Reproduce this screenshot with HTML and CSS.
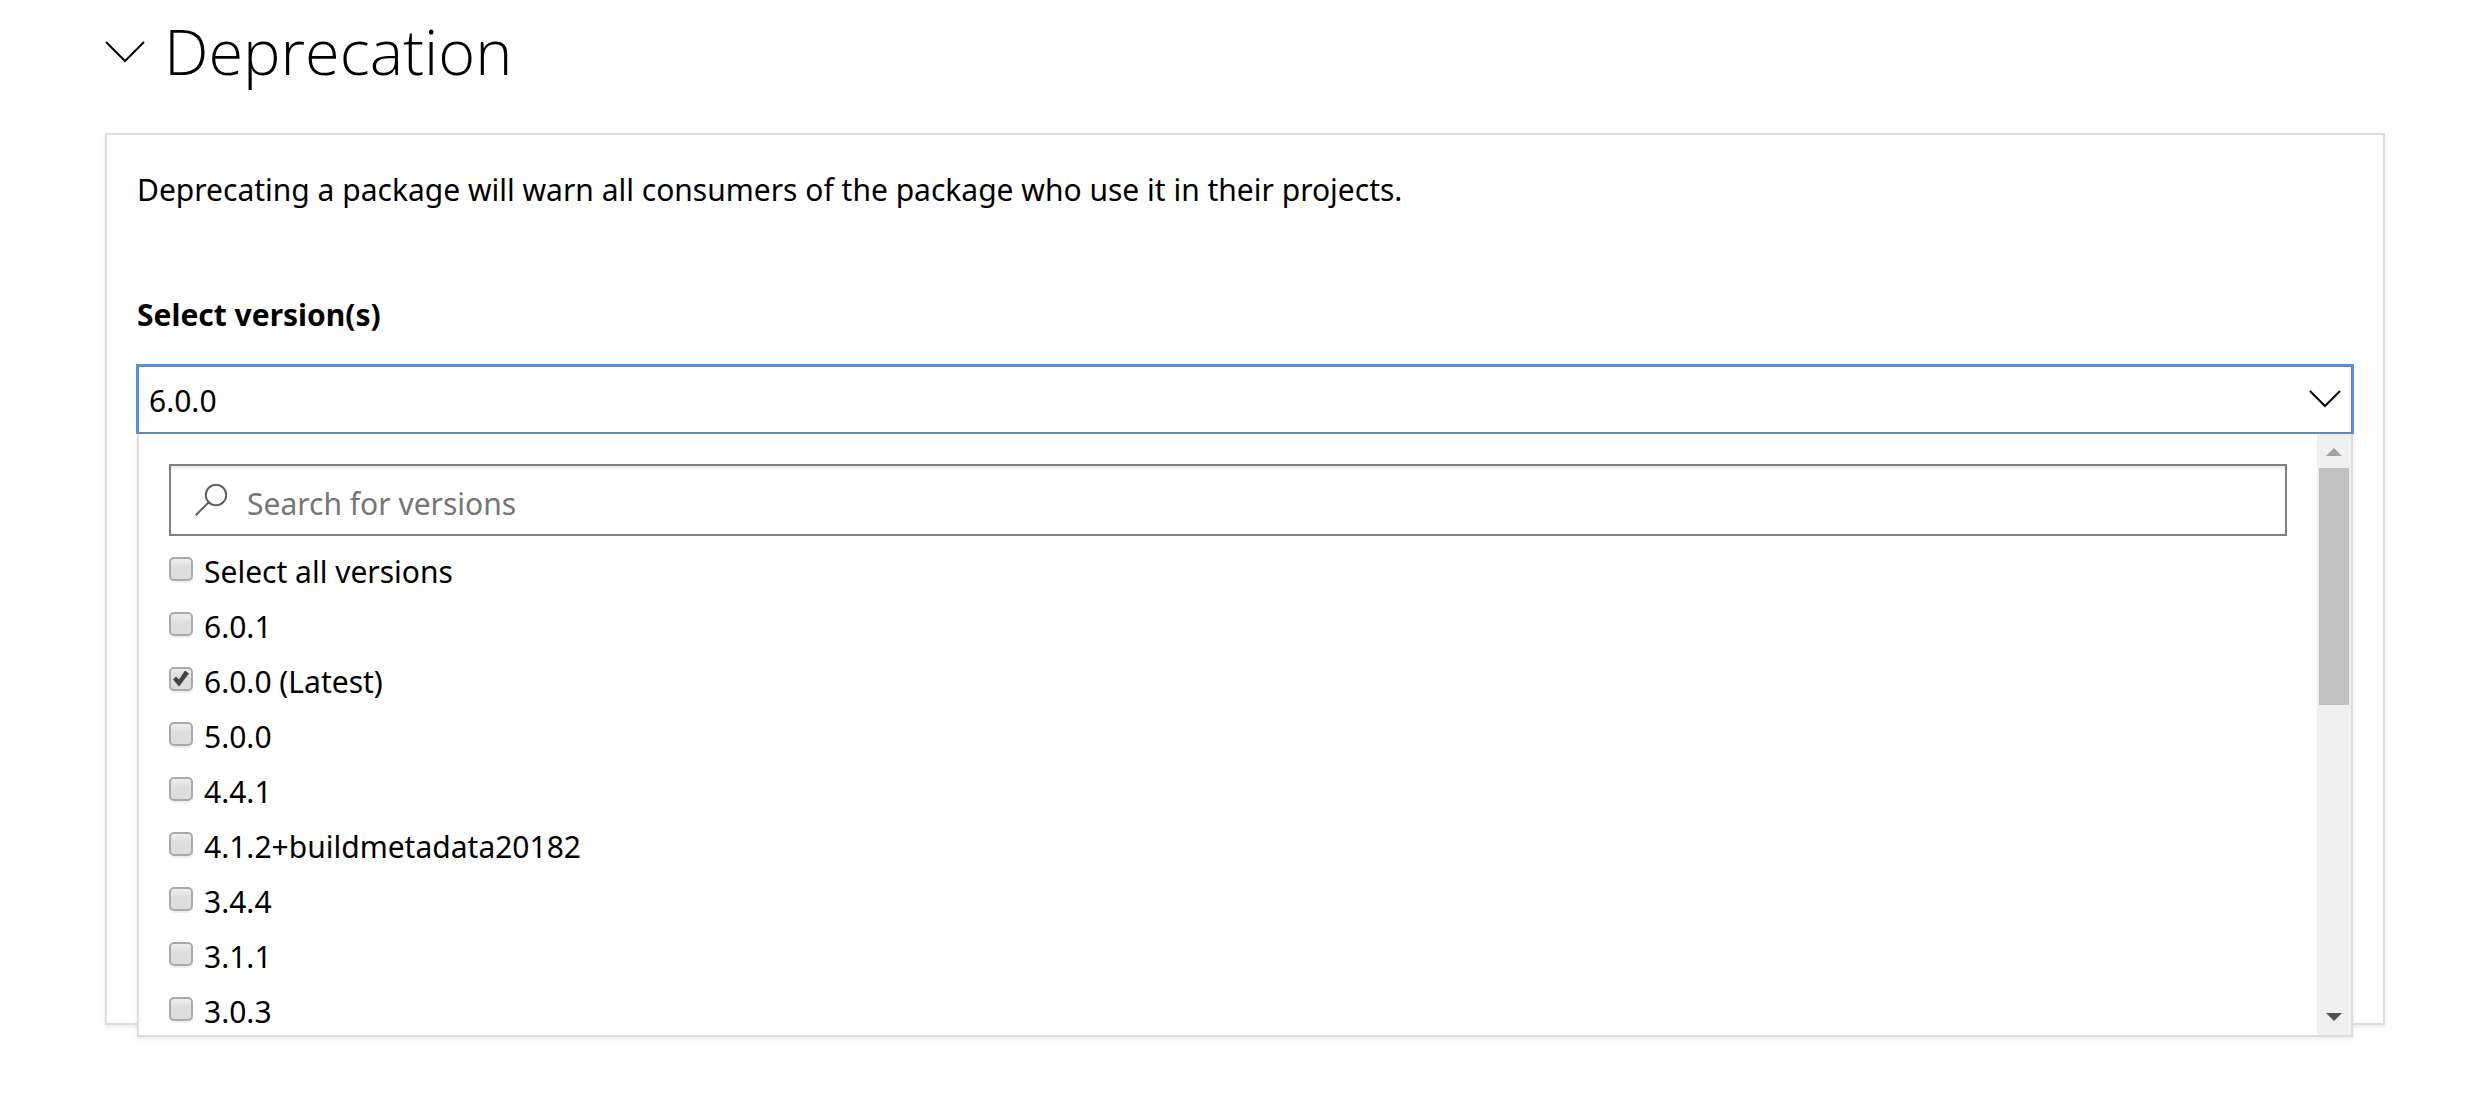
FILE: index.html
```html
<!DOCTYPE html>
<html lang="en">
<head>
  <meta charset="utf-8">
  <meta name="viewport" content="width=device-width, initial-scale=1">
  <title>Deprecation</title>
  <link rel="stylesheet" href="styles.css">
</head>
<body>
  <main class="page">
    <h2 class="heading">
      <button class="heading-toggle" type="button" aria-expanded="true" aria-controls="deprecation">
        <svg class="heading-chevron" viewBox="0 0 40 24" aria-hidden="true"><path d="M1 2 20 21 39 2"/></svg>
        <span>Deprecation</span>
      </button>
    </h2>

    <section class="panel" id="deprecation">
      <p class="description">Deprecating a package will warn all consumers of the package who use it in their projects.</p>

      <div class="field">
        <label class="field-label" for="version-toggle">Select version(s)</label>
        <div class="dropdown">
          <button class="dropdown-toggle" id="version-toggle" type="button" aria-expanded="true" aria-controls="version-menu">
            <span>6.0.0</span>
            <svg class="dropdown-chevron" viewBox="0 0 32 18" aria-hidden="true"><path d="M1 1 16 16 31 1"/></svg>
          </button>

          <div class="menu" id="version-menu">
            <div class="menu-content">
              <div class="search">
                <svg class="search-icon" viewBox="0 0 32 32" aria-hidden="true"><circle cx="21" cy="11" r="10.2"/><path d="M14 18 .7 31.3"/></svg>
                <input class="search-input" type="text" placeholder="Search for versions" aria-label="Search for versions">
              </div>
              <ul class="versions">
                <li><label class="version"><input class="checkbox" type="checkbox">Select all versions</label></li>
                <li><label class="version"><input class="checkbox" type="checkbox">6.0.1</label></li>
                <li><label class="version"><input class="checkbox" type="checkbox" checked>6.0.0 (Latest)</label></li>
                <li><label class="version"><input class="checkbox" type="checkbox">5.0.0</label></li>
                <li><label class="version"><input class="checkbox" type="checkbox">4.4.1</label></li>
                <li><label class="version"><input class="checkbox" type="checkbox">4.1.2+buildmetadata20182</label></li>
                <li><label class="version"><input class="checkbox" type="checkbox">3.4.4</label></li>
                <li><label class="version"><input class="checkbox" type="checkbox">3.1.1</label></li>
                <li><label class="version"><input class="checkbox" type="checkbox">3.0.3</label></li>
              </ul>
            </div>
            <div class="scrollbar" aria-hidden="true">
              <svg class="scroll-arrow scroll-arrow-up" viewBox="0 0 16 8"><path d="M0 8 8 0 16 8z"/></svg>
              <div class="scroll-track"><div class="scroll-thumb"></div></div>
              <svg class="scroll-arrow scroll-arrow-down" viewBox="0 0 16 8"><path d="M0 0h16L8 8z"/></svg>
            </div>
          </div>
        </div>
      </div>
    </section>
  </main>
</body>
</html>
```
FILE: styles.css
```css
* {
  box-sizing: border-box;
}

body {
  margin: 0;
  background: #fff;
  color: #000;
  font-family: "Segoe UI", "Noto Sans", "Open Sans", sans-serif;
  font-size: 30px;
  line-height: 46px;
}

button,
input {
  font: inherit;
  color: inherit;
}

.page {
  padding: 6px 107px 40px 105px;
}

.heading {
  margin: 0 0 37px;
  font-family: "Segoe UI", "Open Sans", sans-serif;
  font-size: 63px;
  font-weight: 300;
  line-height: 90px;
}

.heading-toggle {
  display: flex;
  align-items: center;
  gap: 19px;
  padding: 0;
  border: 0;
  background: none;
}

.heading-chevron {
  width: 40px;
  height: 24px;
  margin-top: 2px;
  fill: none;
  stroke: #000;
  stroke-width: 2;
}

.panel {
  min-height: 892px;
  padding: 32px 30px;
  border: 2px solid #ddd;
  box-shadow: 0 2px 4px rgba(0, 0, 0, 0.08);
}

.description {
  margin: 0 0 79px;
}

.field-label {
  display: block;
  margin-bottom: 27px;
  font-weight: 700;
}

.dropdown {
  position: relative;
}

.dropdown-toggle {
  display: flex;
  align-items: center;
  justify-content: space-between;
  width: 100%;
  height: 68px;
  padding: 4px 11px 0;
  border: 1px solid #4d90fe;
  border-bottom-color: #808080;
  outline: 1px solid #4d90fe;
  background: #fff;
  box-shadow: inset 1px 1px #808080, inset -1px 0 #808080;
}

.dropdown-chevron {
  width: 32px;
  height: 18px;
  margin-bottom: 4px;
  fill: none;
  stroke: #000;
  stroke-width: 2;
}

.menu {
  position: absolute;
  top: 100%;
  left: 0;
  right: 0;
  display: flex;
  height: 603px;
  margin-top: 1px;
  border: 2px solid #ddd;
  border-top: 0;
  background: #fff;
  box-shadow: 0 2px 4px rgba(0, 0, 0, 0.08);
}

.menu-content {
  flex: 1;
  padding: 30px 30px 0;
  overflow: hidden;
}

.search {
  display: flex;
  align-items: center;
  height: 72px;
  padding: 0 24px;
  gap: 20px;
  border: 2px solid #808080;
  box-shadow: inset 0 2px 2px rgba(0, 0, 0, 0.08);
}

.search-icon {
  flex: none;
  width: 32px;
  height: 32px;
  fill: none;
  stroke: #606060;
  stroke-width: 2;
}

.search-input {
  flex: 1;
  height: 52px;
  padding: 6px 0 0;
  border: 0;
  outline: 0;
  background: none;
}

.search-input::placeholder {
  color: #767676;
  opacity: 1;
}

.versions {
  margin: 8px 0 0;
  padding: 0;
  list-style: none;
}

.version {
  display: flex;
  align-items: center;
  gap: 11px;
  height: 55px;
}

.checkbox {
  appearance: none;
  width: 24px;
  height: 24px;
  margin: 0 0 6px;
  border: 2px solid #aaa;
  border-radius: 5px;
  background: linear-gradient(#eee, #dedede 40%, #ddd);
  box-shadow: 0 2px 1px rgba(0, 0, 0, 0.07);
}

.checkbox:checked::before {
  content: "";
  display: block;
  width: 16px;
  height: 16px;
  margin: 2px;
  background: #444;
  clip-path: polygon(0 9px, 3px 6px, 6px 9px, 12px 0, 16px 3px, 6px 16px);
}

.scrollbar {
  display: flex;
  flex-direction: column;
  align-items: center;
  width: 34px;
  padding: 14px 2px;
  background: #f0f0f0;
}

.scroll-arrow {
  flex: none;
  width: 16px;
  height: 8px;
}

.scroll-arrow-up {
  fill: #a3a3a3;
}

.scroll-arrow-down {
  fill: #505050;
}

.scroll-track {
  flex: 1;
  width: 100%;
  padding: 12px 0;
}

.scroll-thumb {
  height: 237px;
  background: #c1c1c1;
}
```
